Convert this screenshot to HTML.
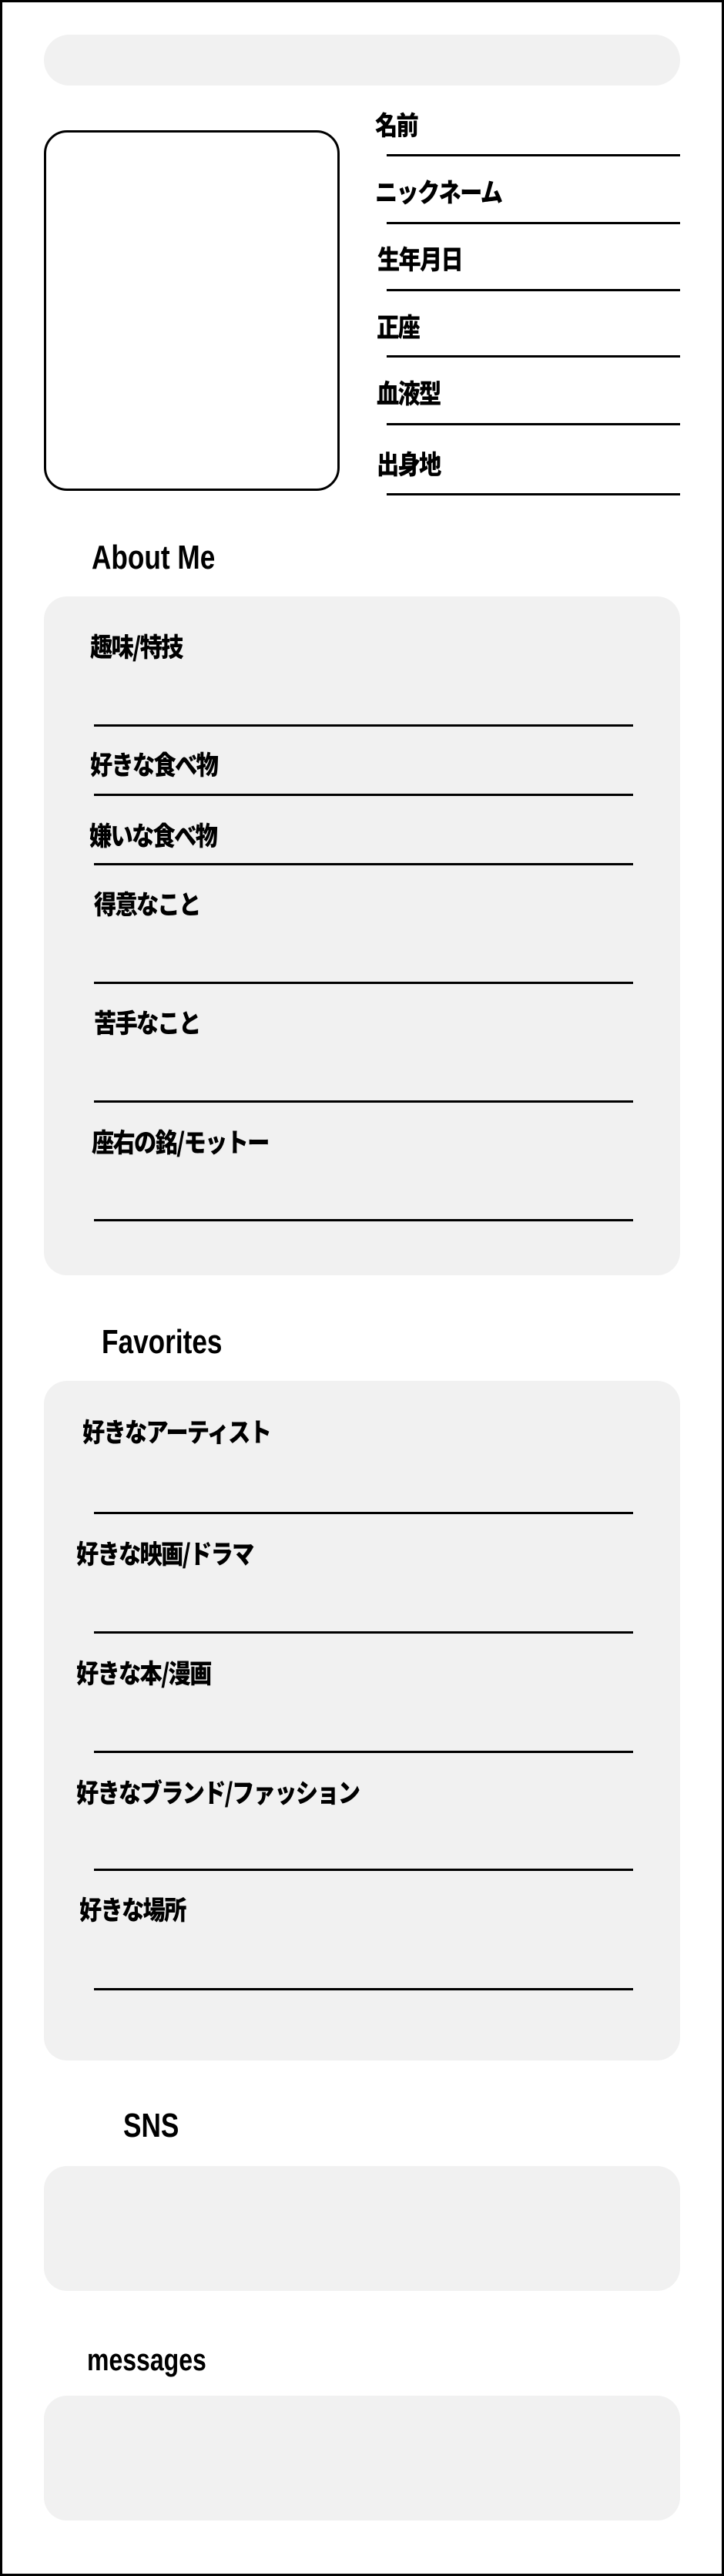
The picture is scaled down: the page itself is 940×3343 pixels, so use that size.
<!DOCTYPE html>
<html><head><meta charset="utf-8"><style>
html,body{margin:0;padding:0}
body{width:940px;height:3343px;position:relative;background:#fff;overflow:hidden;font-family:"Liberation Sans","Noto Sans CJK JP",sans-serif}
.frame{position:absolute;left:0;top:0;width:934px;height:3337px;border:3px solid #000}
.g{position:absolute;background:#f1f1f1;border-radius:30px}
.l{position:absolute;height:3px;background:#000}
.t{position:absolute;font-family:"Noto Sans CJK JP",sans-serif;font-weight:900;font-size:34px;line-height:40px;letter-spacing:-2px;white-space:nowrap;transform:scaleX(0.86);transform-origin:left center}
.h{position:absolute;font-family:"Liberation Sans",sans-serif;font-weight:bold;font-size:44px;line-height:50px;white-space:nowrap;transform:scaleX(0.8);transform-origin:left center}
</style></head><body>
<div class="frame"></div>
<div class="g" style="left:57px;top:45px;width:826px;height:66px;border-radius:33px"></div>
<div style="position:absolute;left:57px;top:169px;width:378px;height:462px;border:3px solid #000;border-radius:30px"></div>

<div class="t" style="left:487px;top:141px">名前</div>
<div class="l" style="left:502px;top:200px;width:381px"></div>
<div class="t" style="left:487px;top:228px">ニックネーム</div>
<div class="l" style="left:502px;top:288px;width:381px"></div>
<div class="t" style="left:490px;top:315px">生年月日</div>
<div class="l" style="left:502px;top:375px;width:381px"></div>
<div class="t" style="left:489px;top:403px">正座</div>
<div class="l" style="left:502px;top:461px;width:381px"></div>
<div class="t" style="left:489px;top:489px">血液型</div>
<div class="l" style="left:502px;top:549px;width:381px"></div>
<div class="t" style="left:489px;top:581px">出身地</div>
<div class="l" style="left:502px;top:640px;width:381px"></div>

<div class="h" style="left:119px;top:699px">About Me</div>
<div class="g" style="left:57px;top:774px;width:826px;height:881px"></div>
<div class="t" style="left:117px;top:818px">趣味/特技</div>
<div class="l" style="left:122px;top:940px;width:700px"></div>
<div class="t" style="left:117px;top:971px">好きな食べ物</div>
<div class="l" style="left:122px;top:1030px;width:700px"></div>
<div class="t" style="left:116px;top:1063px">嫌いな食べ物</div>
<div class="l" style="left:122px;top:1120px;width:700px"></div>
<div class="t" style="left:122px;top:1152px">得意なこと</div>
<div class="l" style="left:122px;top:1274px;width:700px"></div>
<div class="t" style="left:122px;top:1306px">苦手なこと</div>
<div class="l" style="left:122px;top:1428px;width:700px"></div>
<div class="t" style="left:119px;top:1461px">座右の銘/モットー</div>
<div class="l" style="left:122px;top:1582px;width:700px"></div>

<div class="h" style="left:132px;top:1717px">Favorites</div>
<div class="g" style="left:57px;top:1792px;width:826px;height:882px"></div>
<div class="t" style="left:107px;top:1837px">好きなアーティスト</div>
<div class="l" style="left:122px;top:1962px;width:700px"></div>
<div class="t" style="left:99px;top:1995px">好きな映画/ドラマ</div>
<div class="l" style="left:122px;top:2117px;width:700px"></div>
<div class="t" style="left:99px;top:2150px">好きな本/漫画</div>
<div class="l" style="left:122px;top:2272px;width:700px"></div>
<div class="t" style="left:99px;top:2305px">好きなブランド/ファッション</div>
<div class="l" style="left:122px;top:2425px;width:700px"></div>
<div class="t" style="left:103px;top:2457px">好きな場所</div>
<div class="l" style="left:122px;top:2580px;width:700px"></div>

<div class="h" style="left:160px;top:2734px">SNS</div>
<div class="g" style="left:57px;top:2811px;width:826px;height:162px"></div>
<div class="h" style="left:113px;top:3038px;font-size:40px">messages</div>
<div class="g" style="left:57px;top:3109px;width:826px;height:162px"></div>
</body></html>
